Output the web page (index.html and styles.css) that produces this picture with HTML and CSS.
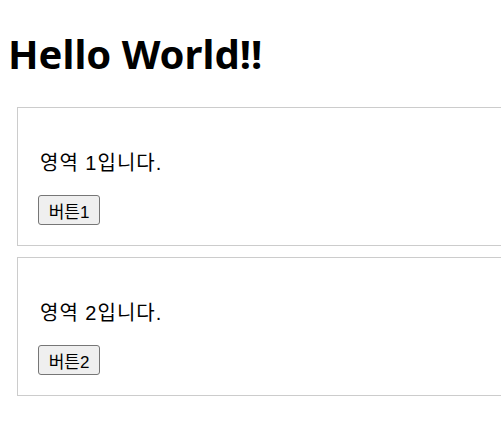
FILE: index.html
```html
<!DOCTYPE html>
<html lang="ko">
<head>
<meta charset="utf-8">
<title>Hello World</title>
<link rel="stylesheet" href="styles.css">
</head>
<body>
<h1 class="title">Hello World!!</h1>
<div class="area">
  <p class="area-text">영역 1입니다.</p>
  <button class="btn" type="button">버튼1</button>
</div>
<div class="area">
  <p class="area-text">영역 2입니다.</p>
  <button class="btn" type="button">버튼2</button>
</div>
</body>
</html>
```

FILE: styles.css
```css
html {
  overflow: hidden;
}
body {
  margin: 0;
  padding: 0 0 0 10px;
  font-family: "Liberation Sans", "Noto Sans CJK KR", sans-serif;
  color: #000;
  background: #fff;
}
.title {
  margin: 27px 0 26px -2px;
  font-family: "Noto Sans", "Noto Sans CJK KR", sans-serif;
  font-weight: 700;
  font-size: 40px;
  line-height: 54px;
}
.area {
  box-sizing: border-box;
  width: 540px;
  margin: 0 0 11px 7px;
  padding: 20px;
  border: 1px solid #cccccc;
}
.area-text {
  margin: 22px 0 18px;
  padding-left: 2px;
  font-size: 20px;
  line-height: 27px;
  letter-spacing: 1px;
}
.btn {
  display: block;
  box-sizing: border-box;
  width: 62px;
  height: 30px;
  padding: 0;
  font-family: "Liberation Sans", "Noto Sans CJK KR", sans-serif;
  font-size: 17px;
  color: #000;
  background: #efefef;
  border: 1px solid #767676;
  border-radius: 3px;
}
```
